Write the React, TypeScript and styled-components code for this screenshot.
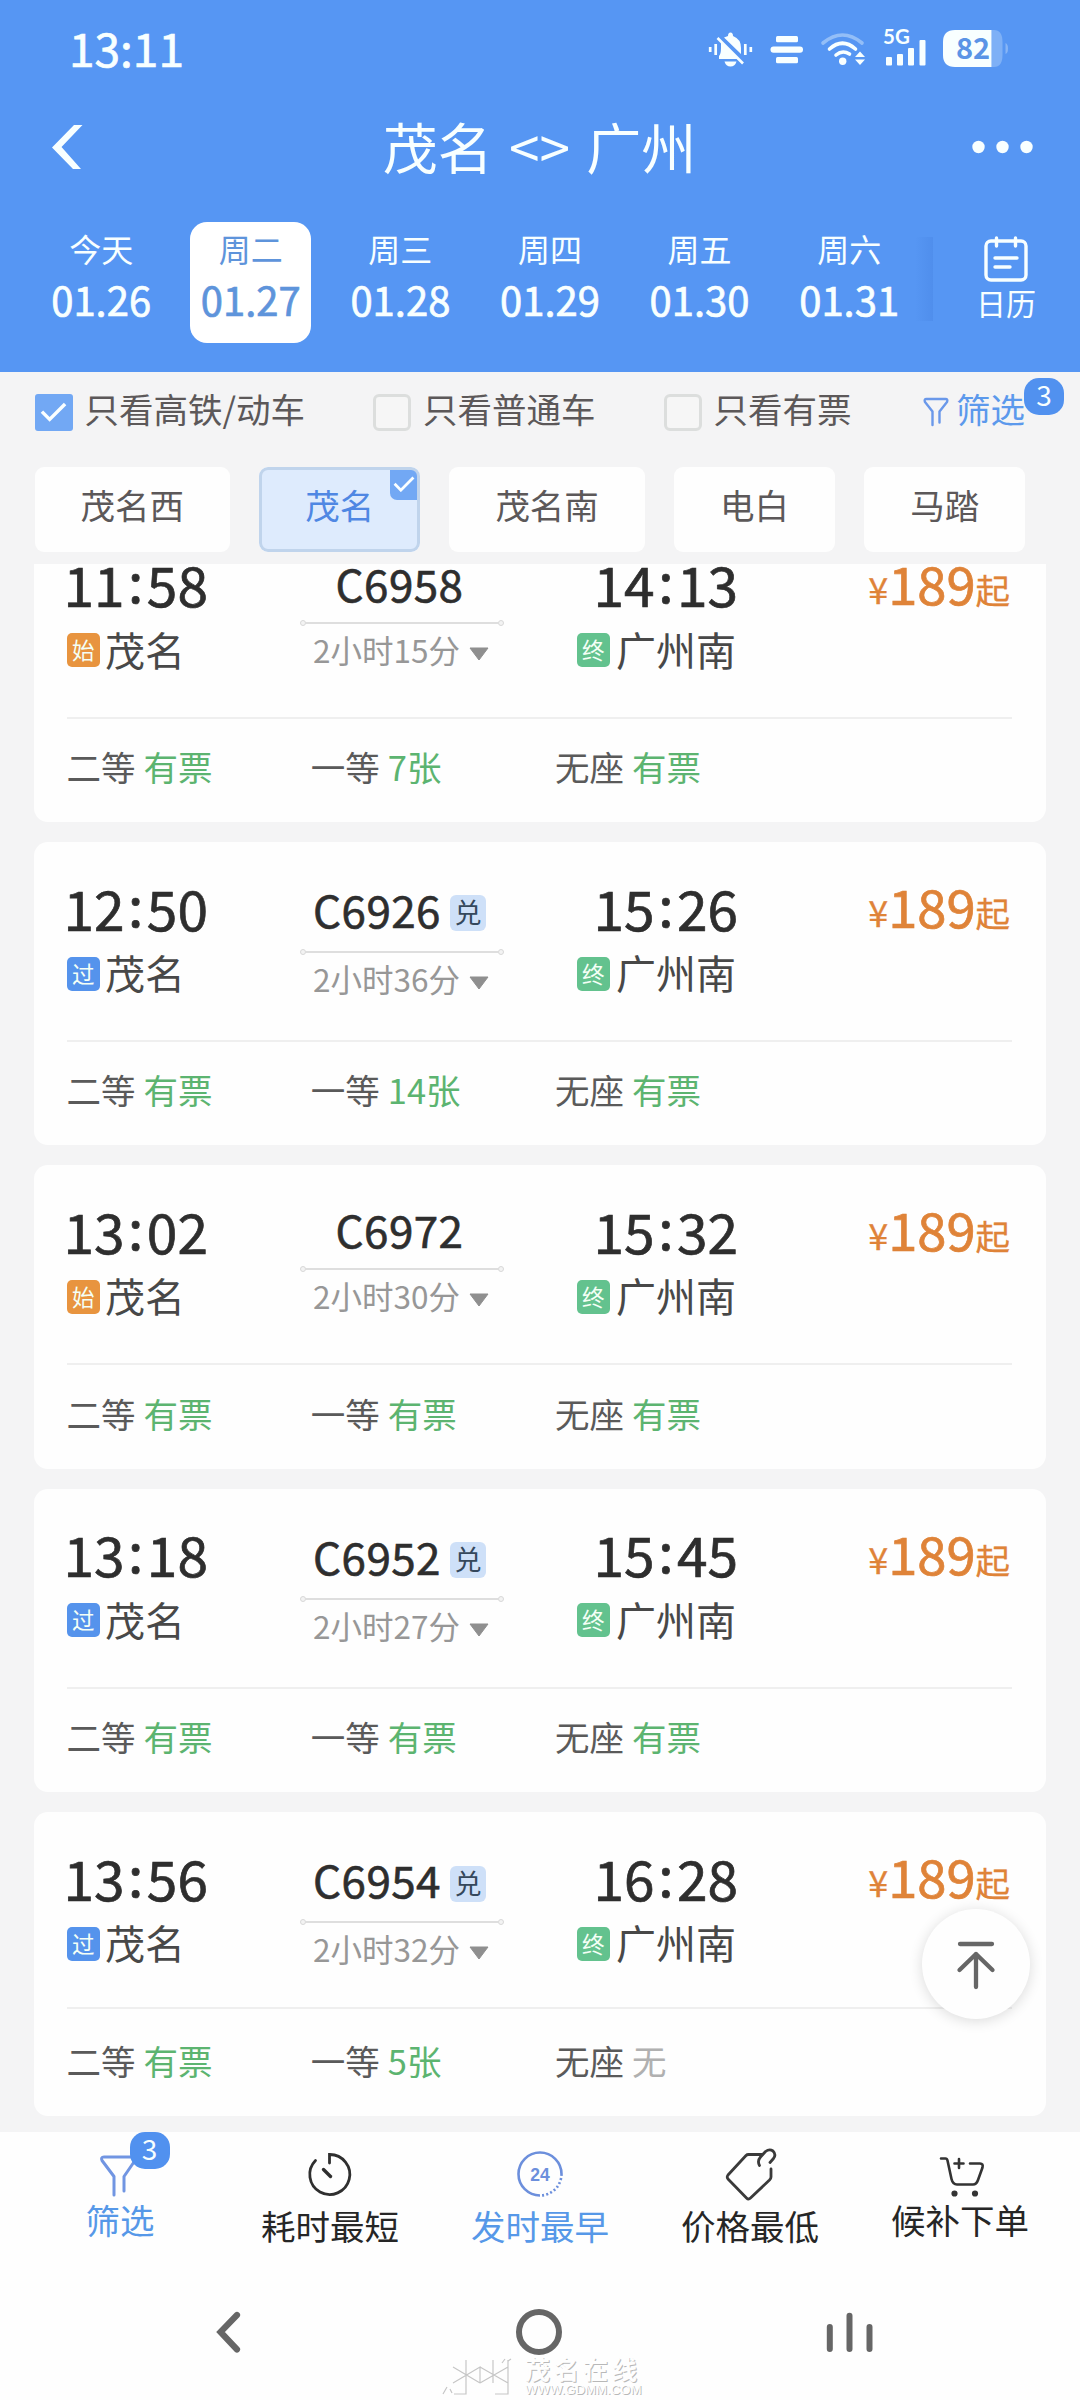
import React from "react";
import styled, { createGlobalStyle, css } from "styled-components";

const GlobalStyle = createGlobalStyle`
  html, body { margin: 0; padding: 0; background: #fefefe; }
  *, *::before, *::after { box-sizing: border-box; }
  body { font-family: "Noto Sans CJK SC", "Noto Sans", sans-serif; color: #2e2e2e; }
`;

const heavier = css`
  -webkit-text-stroke: 0.7px currentColor;
`;

const Screen = styled.div`
  position: relative;
  width: 1080px;
  height: 2400px;
  display: flex;
  flex-direction: column;
  overflow: hidden;
  background: #f4f4f5;
  white-space: nowrap;
`;

/* ---------- header ---------- */

const Header = styled.header`
  height: 372px;
  background: #5696f3;
  color: #f8ffff;
`;

const StatusBar = styled.div`
  height: 100px;
  padding: 0 70px 0 69px;
  display: flex;
  justify-content: space-between;
  align-items: center;
`;

const Clock = styled.span`
  font-size: 46px;
  line-height: 60px;
  padding-bottom: 6px;
  ${heavier}
`;

const StatusIcons = styled.svg`
  width: 310px;
  height: 50px;
  display: block;
  margin-bottom: 3px;
`;

const TitleBar = styled.div`
  height: 93px;
  padding: 0 46px 0 50px;
  display: flex;
  align-items: center;
  justify-content: space-between;
`;

const Title = styled.h1`
  margin: 0;
  padding: 0 0 3px 7px;
  font-size: 55px;
  font-weight: 400;
  line-height: 80px;
  word-spacing: 4px;
`;

const BarIcon = styled.svg<{ $w: number; $h: number }>`
  width: ${(p) => p.$w}px;
  height: ${(p) => p.$h}px;
  display: block;
  flex: none;
`;

const DateRow = styled.div`
  display: flex;
  padding: 29px 0 0 26.4px;
`;

const DateSlot = styled.div`
  width: 149.6px;
  display: flex;
  justify-content: center;
`;

const DateCard = styled.div<{ $active?: boolean }>`
  width: 121px;
  height: 121px;
  padding-top: 6px;
  border-radius: 17px;
  display: flex;
  flex-direction: column;
  align-items: center;
  ${(p) => p.$active && css`background: #fff; color: #5e94db;`}
`;

const Weekday = styled.span`
  font-size: 32px;
  line-height: 40px;
`;

const DateText = styled.span`
  margin-top: 6px;
  font-size: 40px;
  line-height: 50px;
  ${heavier}
`;

const ScrollShade = styled.div`
  width: 18px;
  height: 84px;
  margin: 15px 0 0 -9px;
  background: linear-gradient(90deg, rgba(72, 133, 228, 0), rgba(72, 133, 228, 0.45));
`;

const CalendarButton = styled.div`
  margin-left: 42px;
  width: 62px;
  padding-top: 14px;
  display: flex;
  flex-direction: column;
  align-items: center;
  font-size: 30px;
  line-height: 36px;
  gap: 2px;
`;

/* ---------- filters ---------- */

const Filters = styled.section`
  height: 191.7px;
  flex: none;
  font-size: 34.5px;
  color: #5c5859;
`;

const CheckRow = styled.div`
  height: 80px;
  padding: 0 55px 0 34.5px;
  display: flex;
  align-items: center;
  gap: 68px;
`;

const CheckItem = styled.label`
  display: flex;
  align-items: center;
  gap: 12px;
`;

const Label = styled.span`
  line-height: 50px;
  padding-bottom: 8px;
`;

const Box = styled.span<{ $on?: boolean }>`
  width: 38px;
  height: 37px;
  border-radius: ${(p) => (p.$on ? 3 : 6)}px;
  display: flex;
  align-items: center;
  justify-content: center;
  background: ${(p) => (p.$on ? "#72a8f4" : "#f6f6f6")};
  border: ${(p) => (p.$on ? "none" : "3px solid #dcdedd")};
`;

const FilterLink = styled.div`
  position: relative;
  margin-left: auto;
  display: flex;
  align-items: center;
  gap: 7px;
  color: #5c99ec;
`;

const CountBadge = styled.span<{ $left: number; $top: number }>`
  position: absolute;
  left: ${(p) => p.$left}px;
  top: ${(p) => p.$top}px;
  width: 40px;
  height: 37px;
  border-radius: 15px;
  background: #5191ef;
  color: #f6feff;
  font-size: 28px;
  line-height: 33px;
  text-align: center;
`;

const StationRow = styled.div`
  margin-top: 14.7px;
  padding-left: 34.5px;
  display: flex;
  gap: 29.2px;
`;

const StationPill = styled.div<{ $active?: boolean }>`
  position: relative;
  height: 85.5px;
  padding: 0 46px;
  border-radius: 9px;
  line-height: 75px;
  overflow: hidden;
  background: #fefefe;
  ${(p) =>
    p.$active &&
    css`
      background: #deebfd;
      color: #4f87e3;
      &::after {
        content: "";
        position: absolute;
        inset: 0;
        border: 3px solid #c0d4ec;
        border-radius: 9px;
      }
    `}
`;

const CornerCheck = styled.span`
  position: absolute;
  right: 2px;
  top: 2px;
  width: 28px;
  height: 31px;
  border-radius: 0 6px 0 7px;
  background: #72a8f4;
  display: flex;
  align-items: center;
  justify-content: center;
`;

/* ---------- train list ---------- */

const ListViewport = styled.main`
  height: 1568.3px;
  flex: none;
  padding: 0 33.9px 0 34px;
  overflow: hidden;
`;

const List = styled.div`
  margin-top: -45.1px;
  display: flex;
  flex-direction: column;
  gap: 20px;
`;

const Card = styled.article`
  height: 303.4px;
  flex: none;
  padding: 0 34px 0 32.5px;
  border-radius: 14px;
  background: #fefefe;
  display: flex;
  flex-direction: column;
`;

const Trip = styled.div<{ $height: number }>`
  height: ${(p) => p.$height}px;
  flex: none;
  display: flex;
  border-bottom: 2px solid #efefef;
`;

const Endpoint = styled.div<{ $right?: boolean }>`
  width: ${(p) => (p.$right ? 232.5 : 234)}px;
  padding-top: 32.6px;
  display: flex;
  flex-direction: column;
  align-items: ${(p) => (p.$right ? "flex-end" : "flex-start")};
`;

const Time = styled.span<{ $right?: boolean }>`
  margin: ${(p) => (p.$right ? "0 -2px 0 0" : "0 0 0 -3px")};
  font-size: 55px;
  line-height: 64px;
  ${heavier}
`;

const Colon = styled.span`
  position: relative;
  top: -4px;
  padding: 0 3.5px;
`;

const Station = styled.div<{ $gap: number }>`
  height: 50px;
  margin-top: 10px;
  display: flex;
  align-items: center;
  gap: ${(p) => p.$gap}px;
  font-size: 40px;
  color: #484848;
`;

const StationName = styled.span`
  line-height: 50px;
  padding-bottom: 3px;
`;

const tagColors = { 始: "#e8943f", 过: "#5593ec", 终: "#63c28e" };

const StopTag = styled.span<{ $kind: keyof typeof tagColors }>`
  width: 33.5px;
  height: 34px;
  border-radius: 5px;
  background: ${(p) => tagColors[p.$kind]};
  color: #f4fff6;
  font-size: 22.5px;
  line-height: 32px;
  text-align: center;
`;

const Middle = styled.div`
  width: 203px;
  padding-top: 42px;
  display: flex;
  flex-direction: column;
  align-items: center;
`;

const TrainRow = styled.div<{ $tall?: boolean }>`
  height: ${(p) => (p.$tall ? 50 : 44)}px;
  margin-left: -5px;
  display: flex;
  align-items: center;
  gap: 9px;
  font-size: 44px;
  line-height: 44px;
`;

const TrainNo = styled.span`
  letter-spacing: 0.4px;
  -webkit-text-stroke: 0.6px currentColor;
`;

const ExchangeTag = styled.span`
  width: 36px;
  height: 36px;
  margin-top: 9px;
  border-radius: 6px;
  background: #cee0f8;
  color: #35485c;
  font-size: 27px;
  line-height: 33px;
  text-align: center;
`;

const Track = styled.div`
  position: relative;
  width: 192px;
  height: 2px;
  margin-top: 17px;
  background: #dedede;
  &::before,
  &::after {
    content: "";
    position: absolute;
    top: -2px;
    width: 6px;
    height: 6px;
    border: 1.5px solid #d8d8d8;
    border-radius: 50%;
    background: #f3f3f3;
  }
  &::before { left: -6px; }
  &::after { right: -6px; }
`;

const Duration = styled.div`
  height: 40px;
  margin: 5px 2px 0 0;
  display: flex;
  align-items: center;
  gap: 9px;
  font-size: 31.5px;
  line-height: 40px;
  color: #979797;
`;

const Caret = styled.svg`
  width: 20px;
  height: 14px;
  margin-top: 10px;
`;

const Price = styled.div`
  margin: 31px 2px 0 auto;
  height: 64px;
  display: flex;
  align-items: baseline;
  color: #df8338;
  line-height: 64px;
  font-size: 52.5px;
  ${heavier}
`;

const PriceSmall = styled.span<{ $size: number }>`
  position: relative;
  top: -1px;
  font-size: ${(p) => p.$size}px;
  -webkit-text-stroke: 0.3px currentColor;
`;

const Seats = styled.div`
  margin-top: auto;
  height: 103.4px;
  padding-bottom: 8.5px;
  display: flex;
  align-items: center;
  font-size: 34.5px;
  color: #5a5a5a;
`;

const Seat = styled.div`
  width: 244.3px;
  display: flex;
  gap: 8px;
`;

const SeatValue = styled.span<{ $none?: boolean }>`
  color: ${(p) => (p.$none ? "#b0b0b0" : "#5cb470")};
`;

/* ---------- overlays and bottom bars ---------- */

const BackTop = styled.button`
  position: absolute;
  left: 922px;
  top: 1909px;
  width: 108px;
  height: 110px;
  padding: 0;
  border: 0;
  border-radius: 50%;
  background: #fefefe;
  box-shadow: 0 2px 14px rgba(0, 0, 0, 0.14);
`;

const TabBar = styled.nav`
  height: 158px;
  flex: none;
  padding: 0 15px;
  display: flex;
  background: #fefefe;
`;

const Tab = styled.div<{ $blue?: boolean; $raised?: boolean }>`
  position: relative;
  flex: 1;
  padding-top: 13px;
  display: flex;
  flex-direction: column;
  align-items: center;
  color: ${(p) => (p.$blue ? "#5698e8" : "#262626")};
  font-size: 34.5px;
  line-height: 50px;
  gap: ${(p) => (p.$raised ? 0 : 6)}px;
`;

const TabIcon = styled.svg`
  width: 60px;
  height: 60px;
  flex: none;
  display: block;
  margin-bottom: -11px;
`;

const SystemNav = styled.div`
  height: 110px;
  flex: none;
  padding: 17px 205px 0 212px;
  display: flex;
  align-items: flex-start;
  justify-content: space-between;
  background: #fefefe;
`;

const HomeIcon = styled(BarIcon)`
  margin-left: 9px;
`;

const Watermark = styled.div`
  position: absolute;
  left: 442px;
  top: 2354px;
  display: flex;
  gap: 13px;
  color: #fefefe;
  text-shadow: 1px 1px 0 #b8b8b8;
`;

const WatermarkText = styled.div`
  width: 118px;
  display: flex;
  flex-direction: column;
`;

const WatermarkName = styled.span`
  font-size: 25px;
  font-weight: 700;
  line-height: 29px;
  letter-spacing: 4px;
`;

const WatermarkUrl = styled.span`
  font: 13.2px/13px "Liberation Sans", sans-serif;
`;

/* ---------- data ---------- */

const dates = [
  ["今天", "01.26"],
  ["周二", "01.27"],
  ["周三", "01.28"],
  ["周四", "01.29"],
  ["周五", "01.30"],
  ["周六", "01.31"],
];

type Train = {
  depart: string;
  arrive: string;
  no: string;
  duration: string;
  kind: keyof typeof tagColors;
  exchange?: boolean;
  tripHeight?: number;
  seats: [string, string, string];
};

const trains: Train[] = [
  { depart: "11:58", arrive: "14:13", no: "C6958", duration: "2小时15分", kind: "始", seats: ["有票", "7张", "有票"] },
  { depart: "12:50", arrive: "15:26", no: "C6926", duration: "2小时36分", kind: "过", exchange: true, seats: ["有票", "14张", "有票"] },
  { depart: "13:02", arrive: "15:32", no: "C6972", duration: "2小时30分", kind: "始", seats: ["有票", "有票", "有票"] },
  { depart: "13:18", arrive: "15:45", no: "C6952", duration: "2小时27分", kind: "过", exchange: true, seats: ["有票", "有票", "有票"] },
  { depart: "13:56", arrive: "16:28", no: "C6954", duration: "2小时32分", kind: "过", exchange: true, tripHeight: 197, seats: ["有票", "5张", "无"] },
];

const seatNames = ["二等", "一等", "无座"];

/* ---------- pieces ---------- */

const Tick = ({ size = 27 }: { size?: number }) => (
  <svg width={size} height={size * 0.75} viewBox="0 0 28 21" fill="none" stroke="#fbffff" strokeWidth="3.6">
    <path d="M2 10 L10 18 L26 2" />
  </svg>
);

const TimeText = ({ value, right }: { value: string; right?: boolean }) => {
  const [h, m] = value.split(":");
  return (
    <Time $right={right}>
      {h}
      <Colon>:</Colon>
      {m}
    </Time>
  );
};

const TrainCard = ({ train }: { train: Train }) => (
  <Card>
    <Trip $height={train.tripHeight ?? 200}>
      <Endpoint>
        <TimeText value={train.depart} />
        <Station $gap={5}>
          <StopTag $kind={train.kind}>{train.kind}</StopTag>
          <StationName>茂名</StationName>
        </Station>
      </Endpoint>
      <Middle>
        <TrainRow $tall={train.exchange}>
          <TrainNo>{train.no}</TrainNo>
          {train.exchange && <ExchangeTag>兑</ExchangeTag>}
        </TrainRow>
        <Track />
        <Duration>
          <span>{train.duration}</span>
          <Caret viewBox="0 0 20 14">
            <path d="M1 1 H19 L10 13 Z" fill="#8f8f8f" stroke="#8f8f8f" strokeLinejoin="round" />
          </Caret>
        </Duration>
      </Middle>
      <Endpoint $right>
        <TimeText value={train.arrive} right />
        <Station $gap={6}>
          <StopTag $kind="终">终</StopTag>
          <StationName>广州南</StationName>
        </Station>
      </Endpoint>
      <Price>
        <PriceSmall $size={36}>¥</PriceSmall>
        189
        <PriceSmall $size={34.5}>起</PriceSmall>
      </Price>
    </Trip>
    <Seats>
      {seatNames.map((name, i) => (
        <Seat key={name}>
          <span>{name}</span>
          <SeatValue $none={train.seats[i] === "无"}>{train.seats[i]}</SeatValue>
        </Seat>
      ))}
    </Seats>
  </Card>
);

export default function App() {
  return (
    <>
      <GlobalStyle />
      <Screen>
        <Header>
          <StatusBar>
            <Clock>13:11</Clock>
            <StatusIcons viewBox="700 23 310 50" fill="#f8ffff">
              {/* muted bell */}
              <path d="M728 35 Q728 31.500 730.500 31.500 Q733 31.500 733 35 Q741 38 741 47 V53 L724 36.500 Z" />
              <path d="M721 40 L739 58 H719 V55 Q721 53 721 47 Z" />
              <path d="M717.500 37 L743 62.500" stroke="#f8ffff" strokeWidth="2.600" />
              <path d="M724.500 60.500 H736.500 Q735 65.500 730.500 65.500 Q726 65.500 724.500 60.500 Z" />
              <path d="M710.200 46 V51 M715.700 43 V54 M745.300 43 V54 M750.800 46 V51" stroke="#f8ffff" strokeWidth="2.700" />
              {/* menu */}
              <rect x="776" y="35" width="22" height="6.300" rx="1.500" />
              <rect x="770.500" y="45.500" width="32.500" height="6.300" rx="3" />
              <rect x="776" y="56" width="22" height="6.300" rx="1.500" />
              {/* wifi */}
              <g fill="none" stroke="#f8ffff" strokeWidth="3.600" strokeLinecap="round">
                <path d="M823 42 Q842.500 26 862 42" opacity="0.38" />
                <path d="M829.500 48 Q842.500 36.500 855.500 48" />
                <path d="M836 54 Q842.500 48.500 849.500 53" />
              </g>
              <circle cx="842.700" cy="60.300" r="3.700" />
              <path d="M860 50.500 L865 56 H855 Z M860 64 L865 58.500 H855 Z" />
              {/* signal */}
              <text x="883" y="43" fontSize="20.500" fontWeight="700" fontFamily="Lato, sans-serif">5G</text>
              <rect x="886" y="56" width="6" height="8.500" rx="1" />
              <rect x="897" y="53" width="6" height="11.500" rx="1" />
              <rect x="908" y="47" width="6" height="17.500" rx="1" />
              <rect x="919.500" y="39" width="6" height="25.500" rx="1" />
              {/* battery */}
              <path d="M991.500 29 H994 Q1002.500 29 1002.500 41 V54 Q1002.500 66 994 66 H991.500 Z" opacity="0.25" />
              <path d="M1005.500 42 Q1008 43 1008 47.500 Q1008 52 1005.500 53 Z" opacity="0.3" />
              <path d="M955 29 H991.500 V66 H955 Q943 66 943 54 V41 Q943 29 955 29 Z" />
              <text x="956" y="58" fontSize="29" fontWeight="700" fill="#5b94e6" fontFamily="Noto Sans CJK SC, sans-serif">82</text>
            </StatusIcons>
          </StatusBar>
          <TitleBar>
            <BarIcon $w={50} $h={46} viewBox="0 0 50 46">
              <path d="M24 1 H32.500 L11.500 23 L31 45 H23 L2 23.500 Z" fill="#f8ffff" />
            </BarIcon>
            <Title>茂名 &lt;&gt; 广州</Title>
            <BarIcon $w={62} $h={14} viewBox="0 0 62 14" fill="#f8ffff">
              <circle cx="6.500" cy="7" r="6.200" />
              <circle cx="30.500" cy="7" r="6.200" />
              <circle cx="54.500" cy="7" r="6.200" />
            </BarIcon>
          </TitleBar>
          <DateRow>
            {dates.map(([day, date], i) => (
              <DateSlot key={date}>
                <DateCard $active={i === 1}>
                  <Weekday>{day}</Weekday>
                  <DateText>{date}</DateText>
                </DateCard>
              </DateSlot>
            ))}
            <ScrollShade />
            <CalendarButton>
              <BarIcon $w={44} $h={46} viewBox="0 0 44 46" fill="none" stroke="#f8ffff" strokeWidth="3.4" strokeLinecap="round">
                <rect x="2" y="5" width="40" height="39" rx="5" />
                <path d="M12.500 2 V10 M31.500 2 V10 M11 22 H33 M11 31 H26" />
              </BarIcon>
              日历
            </CalendarButton>
          </DateRow>
        </Header>

        <Filters>
          <CheckRow>
            <CheckItem>
              <Box $on>
                <Tick />
              </Box>
              <Label>只看高铁/动车</Label>
            </CheckItem>
            <CheckItem>
              <Box />
              <Label>只看普通车</Label>
            </CheckItem>
            <CheckItem>
              <Box />
              <Label>只看有票</Label>
            </CheckItem>
            <FilterLink>
              <BarIcon $w={26} $h={30} viewBox="0 0 26 30" fill="none" stroke="#6a98ea" strokeWidth="2.4" strokeLinejoin="round" strokeLinecap="round">
                <path d="M9.500 28 V14.500 L2 5 Q0.800 2 3.500 2 H22.500 Q25.200 2 24 5 L16.500 14.500 V25.500" />
              </BarIcon>
              <Label>筛选</Label>
              <CountBadge $left={101} $top={-5.5}>3</CountBadge>
            </FilterLink>
          </CheckRow>
          <StationRow>
            <StationPill>茂名西</StationPill>
            <StationPill $active>
              茂名
              <CornerCheck>
                <Tick size={22} />
              </CornerCheck>
            </StationPill>
            <StationPill>茂名南</StationPill>
            <StationPill>电白</StationPill>
            <StationPill>马踏</StationPill>
          </StationRow>
        </Filters>

        <ListViewport>
          <List>
            {trains.map((t) => (
              <TrainCard key={t.no} train={t} />
            ))}
          </List>
        </ListViewport>

        <TabBar>
          <Tab $blue $raised>
            <TabIcon viewBox="0 0 60 60" fill="none" stroke="#7195e2" strokeWidth="3" strokeLinecap="round" strokeLinejoin="round">
              <path d="M24 50 V31.500 L12 15.500 Q10.500 12 14 12 H43 Q46.500 12 45 15.500 L34 31.500 V46" />
            </TabIcon>
            <CountBadge $left={114.5} $top={0}>3</CountBadge>
            <span>筛选</span>
          </Tab>
          <Tab>
            <TabIcon viewBox="0 0 60 60" fill="none" stroke="#2f2f2f" strokeWidth="2.8" strokeLinecap="round">
              <path d="M29.500 18 V9.500 A20 20 0 1 1 15.500 15.500" />
              <path d="M23.500 24.500 L30.500 31.500" strokeWidth="3.4" />
            </TabIcon>
            <span>耗时最短</span>
          </Tab>
          <Tab $blue>
            <TabIcon viewBox="0 0 60 60" fill="none" stroke="#6c8fdc" strokeWidth="2.6">
              <path d="M30 50.500 A21.500 21.500 0 1 1 51.500 29" />
              <path d="M51.500 29 A21.500 21.500 0 0 1 30 50.500" strokeDasharray="2 2.200" />
              <text x="30" y="35.500" textAnchor="middle" fontSize="17.500" fontWeight="700" fill="#6c8fdc" stroke="none" fontFamily="Liberation Sans, sans-serif">24</text>
            </TabIcon>
            <span>发时最早</span>
          </Tab>
          <Tab>
            <TabIcon viewBox="0 0 60 60" fill="none" stroke="#3a3a3a" strokeWidth="2.8" strokeLinecap="round" strokeLinejoin="round">
              <path d="M42 9.500 H28.500 Q27 9.500 26 10.500 L8 30 Q6.500 32 8 34 L26.500 53 Q28.500 55 30.500 53 L49.500 35 Q51 33.500 51 32 V24" />
              <path d="M39.500 20.500 Q37 16 40.500 12 L45.500 6.500 Q49.500 3.500 53 6 Q56.500 9.500 53.500 13.500 L50 17.500" />
            </TabIcon>
            <span>价格最低</span>
          </Tab>
          <Tab $raised>
            <TabIcon viewBox="0 0 60 60" fill="none" stroke="#333" strokeWidth="2.600" strokeLinecap="round" strokeLinejoin="round">
              <path d="M11 13.500 H15.500 Q17 13.500 17.500 15.500 L21.500 34 Q22.800 39.500 27 39.500 H43 Q46.500 39.500 48 35 L52.500 22.500 Q53.500 18.500 50 18.500 H40" />
              <path d="M24.500 18.500 H33.500 M29 14 V23" />
              <circle cx="24.500" cy="48.500" r="1.800" fill="#333" />
              <circle cx="45" cy="48.500" r="1.800" fill="#333" />
            </TabIcon>
            <span>候补下单</span>
          </Tab>
        </TabBar>

        <SystemNav>
          <BarIcon $w={32} $h={50} viewBox="0 0 32 50" fill="none" stroke="#666" strokeWidth="6.200" strokeLinecap="round" strokeLinejoin="miter">
            <path d="M25 8 L8.500 25 L25 42.500" />
          </BarIcon>
          <HomeIcon $w={50} $h={50} viewBox="0 0 50 50" fill="none" stroke="#666" strokeWidth="6">
            <circle cx="25" cy="25" r="20" />
          </HomeIcon>
          <BarIcon $w={50} $h={50} viewBox="0 0 50 50" stroke="#666" strokeWidth="6" strokeLinecap="round">
            <path d="M4.800 20 V42 M24.500 8.700 V42 M44.500 20 V42" />
          </BarIcon>
        </SystemNav>

        <BackTop aria-label="返回顶部">
          <svg width="108" height="110" viewBox="0 0 108 110" fill="none" stroke="#666" strokeWidth="4.300" strokeLinecap="round" strokeLinejoin="round">
            <path d="M38 35 H70 M54 78 V45 M37.500 61 L54 45 L70.500 61" />
          </svg>
        </BackTop>

        <Watermark>
          <svg width="70" height="42" viewBox="0 0 70 42" fill="none" stroke="#c6c6c6" strokeWidth="1.2">
            <path d="M24 6 V40 H12 M11 13 L38 29 M11 29 L38 13 V29 M51 6 V29 M38 29 L66 13 M38 13 L66 29 M66 6 V40 H53" />
            <path d="M1 40 L5 33 M8 35 L10 39 M60 9 L63 5 M66 7 L69 5" />
          </svg>
          <WatermarkText>
            <WatermarkName>茂名在线</WatermarkName>
            <WatermarkUrl>WWW.GDMM.COM</WatermarkUrl>
          </WatermarkText>
        </Watermark>
      </Screen>
    </>
  );
}
